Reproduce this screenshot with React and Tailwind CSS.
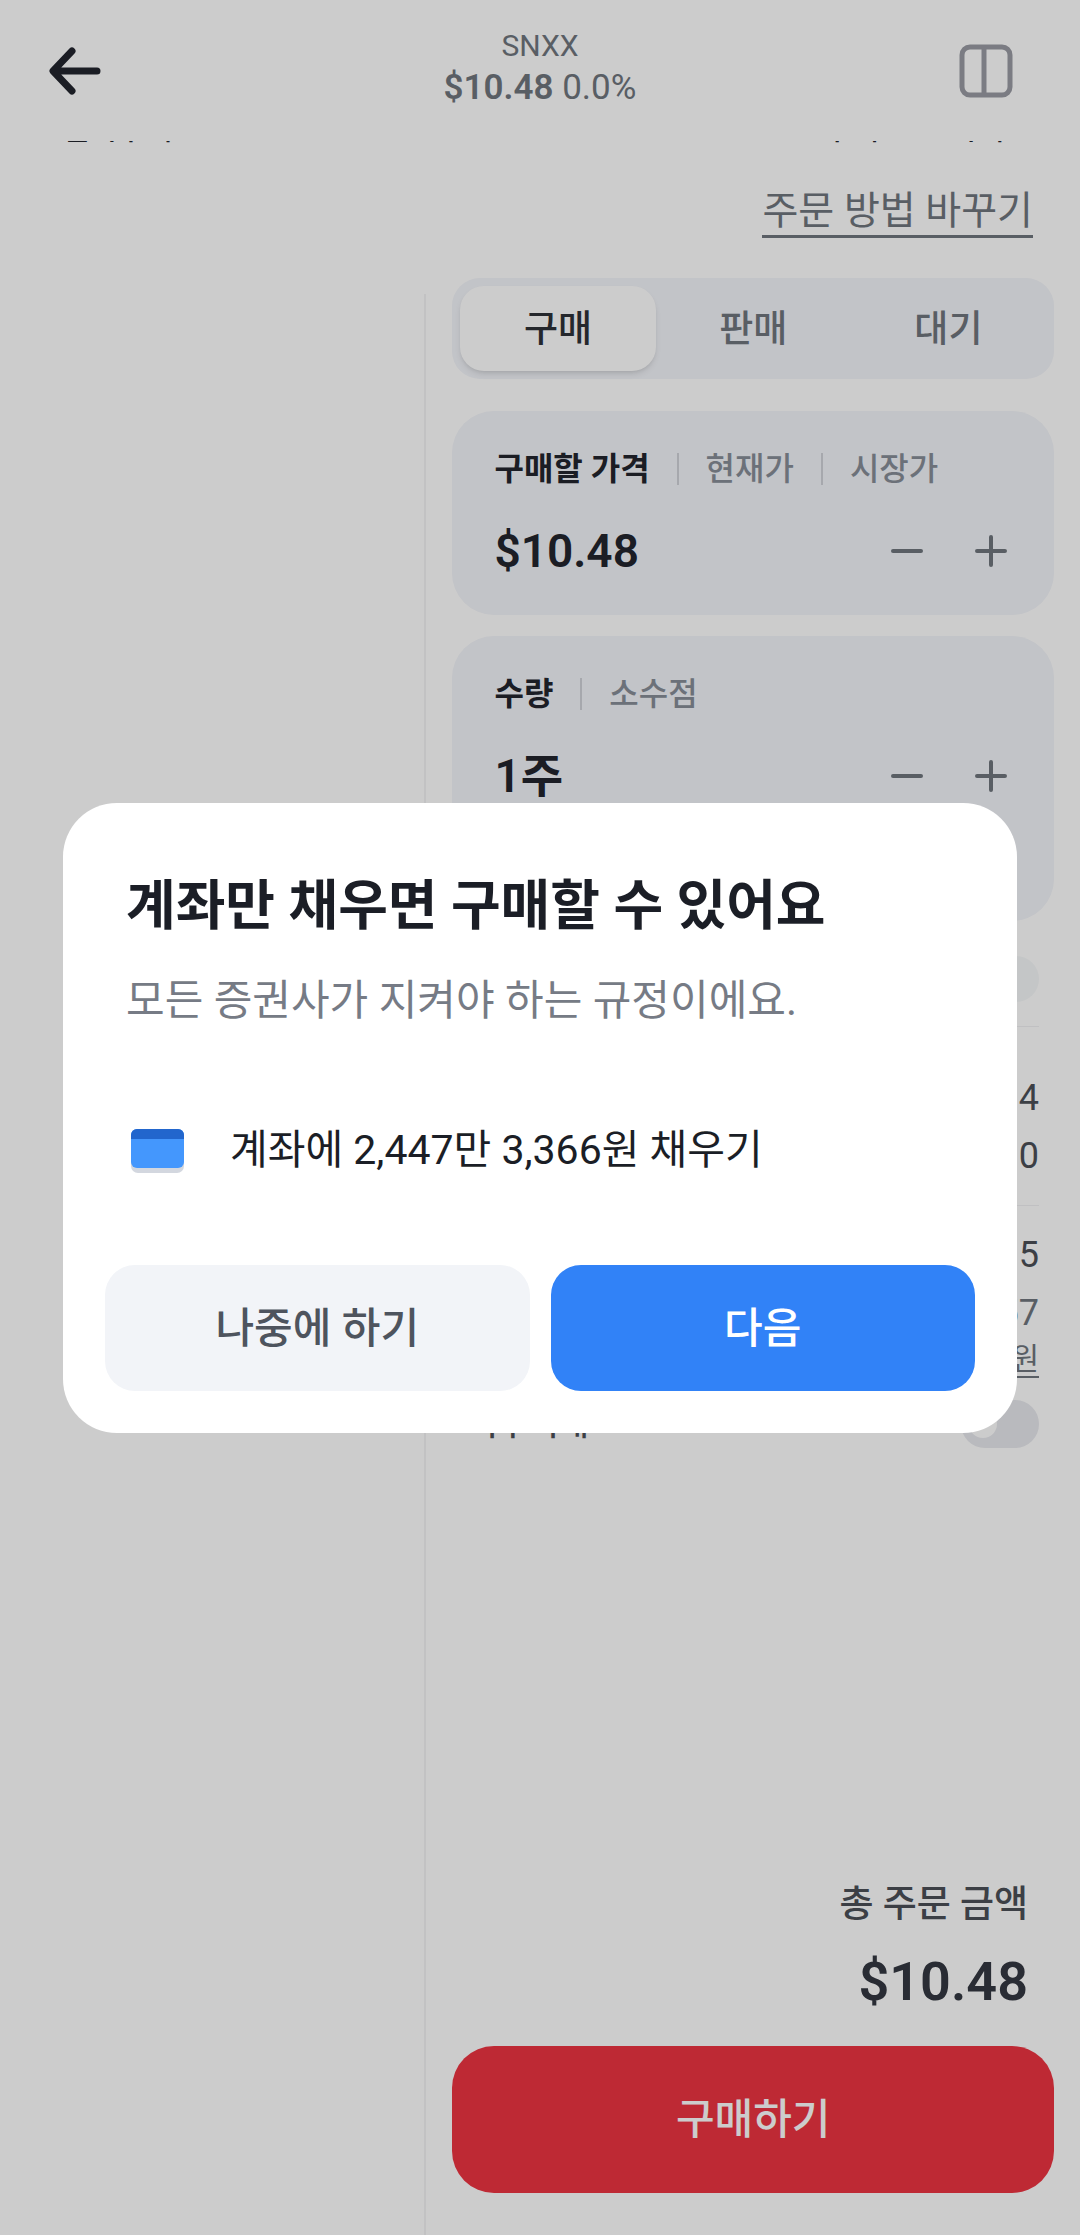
import { useState } from "react"

function Header() {
    return (
        <header className="grid h-[141px] grid-cols-[1fr_auto_1fr] items-center px-12">
            <button aria-label="뒤로" className="justify-self-start text-[#22252e]">
                <svg width="54" height="54" viewBox="0 0 54 54" fill="none" stroke="currentColor" strokeWidth="7" strokeLinecap="round" strokeLinejoin="round">
                    <path d="M24 7L5 27L24 47M6 27H49" />
                </svg>
            </button>
            <div className="flex flex-col items-center pb-2 text-[#70767e]">
                <p className="text-[30px] leading-[42px]">SNXX</p>
                <p className="text-[35px] leading-[42px]"><b className="font-semibold">$10.48</b> 0.0%</p>
            </div>
            <button aria-label="화면 나누기" className="mr-4 justify-self-end text-[#9a9ca4]">
                <svg width="60" height="60" viewBox="0 0 60 60" fill="none" stroke="currentColor" strokeWidth="5">
                    <rect x="6" y="6" width="48" height="48" rx="8" />
                    <path d="M28 6V54" />
                </svg>
            </button>
        </header>
    )
}

function Tabs() {
    const [tab, setTab] = useState("구매")

    return (
        <div className="grid grid-cols-3 rounded-[28px] bg-[#f3f5fa] p-2">
            {["구매", "판매", "대기"].map((name) => (
                <button
                    key={name}
                    onClick={() => setTab(name)}
                    className={
                        tab === name
                            ? "h-[85px] rounded-3xl bg-white pt-[2px] text-[37px] font-medium text-[#2e3138] shadow-md"
                            : "h-[85px] rounded-3xl pt-[2px] text-[37px] font-medium text-[#70767e]"
                    }
                >
                    {name}
                </button>
            ))}
        </div>
    )
}

function Stepper({ id, label, options, value, tall }) {
    return (
        <div className={tall ? "rounded-[42px] bg-[#f3f5fa] px-[42px] pt-[34px] pb-[115px]" : "rounded-[42px] bg-[#f3f5fa] px-[42px] pt-[34px] pb-[34px]"}>
            <div className="flex h-12 items-center text-[32px] font-medium text-[#878e98]">
                <label htmlFor={id} className="font-semibold text-[#22252e]">{label}</label>
                {options.map((option) => (
                    <div key={option} className="flex items-center">
                        <span className="mx-[27px] h-8 w-[2px] bg-[#d0d3d9]" />
                        <button>{option}</button>
                    </div>
                ))}
            </div>
            <div className="mt-7 flex h-[60px] items-center">
                <input id={id} defaultValue={value} className="w-0 min-w-0 flex-1 bg-transparent text-[46px] font-semibold text-[#22252e] outline-none" />
                <div className="flex gap-11 text-[#70767e]">
                    <button aria-label={`${label} 줄이기`}>
                        <svg width="40" height="40" viewBox="0 0 40 40" stroke="currentColor" strokeWidth="4" strokeLinecap="round"><path d="M5 20H33" /></svg>
                    </button>
                    <button aria-label={`${label} 늘리기`}>
                        <svg width="40" height="40" viewBox="0 0 40 40" stroke="currentColor" strokeWidth="4" strokeLinecap="round"><path d="M5 20H33M19 6V34" /></svg>
                    </button>
                </div>
            </div>
        </div>
    )
}

function Summary() {
    return (
        <div className="px-[15px] text-right text-[36px] text-[#4b4f57]">
            <div className="mt-[35px] ml-auto h-[46px] w-24 rounded-full bg-[#f6f8f9]" />
            <hr className="mt-6 mb-[42px] border-[#f0f1f3]" />
            <p className="leading-[58px]">4</p>
            <p className="leading-[58px]">0</p>
            <hr className="my-5 border-[#f0f1f3]" />
            <p className="leading-[58px]">5</p>
            <p className="leading-[58px] text-[#70767e]">57</p>
            <div className="flex justify-end">
                <a href="#exchange" className="border-b-2 border-[#70767e] text-[30px] leading-[34px] text-[#70767e]">원</a>
            </div>
            <label className="mt-[22px] flex h-12 items-center justify-between text-[33px] font-medium">
                미수거래
                <input type="checkbox" role="switch" className="peer sr-only" />
                <span className="flex h-12 w-[78px] items-center rounded-full bg-[#e8e9ee] px-2 peer-checked:justify-end">
                    <span className="size-7 rounded-full bg-white" />
                </span>
            </label>
        </div>
    )
}

function DepositDialog() {
    return (
        <div className="fixed inset-0 flex items-center justify-center bg-black/20 px-[63px]">
            <div role="dialog" aria-modal="true" aria-labelledby="deposit-title" className="w-full rounded-[54px] bg-white p-[42px] pt-[68px]">
                <div className="px-[21px]">
                    <h2 id="deposit-title" className="text-[54px] leading-[72px] font-bold text-[#1b1e26]">계좌만 채우면 구매할 수 있어요</h2>
                    <p className="mt-7 text-[42px] leading-[60px] text-[#767b85]">모든 증권사가 지켜야 하는 규정이에요.</p>
                    <div className="mt-[89px] flex items-center">
                        <svg width="64" height="60" viewBox="0 0 64 60" className="shrink-0">
                            <rect x="5" y="14" width="53" height="39" rx="7" fill="#d3d7df" />
                            <rect x="5" y="9" width="53" height="39" rx="6" fill="#4497fd" />
                            <path d="M5 19V15a6 6 0 0 1 6-6H52a6 6 0 0 1 6 6V19Z" fill="#2266cd" />
                        </svg>
                        <p className="ml-10 text-[41px] leading-[60px] text-[#1b1e26]">계좌에 2,447만 3,366원 채우기</p>
                    </div>
                </div>
                <div className="mt-[85px] grid grid-cols-2 gap-[21px] text-[42px] font-medium">
                    <button className="h-[126px] rounded-[30px] bg-[#f2f4f8] pt-[2px] text-[#4e545e]">나중에 하기</button>
                    <button className="h-[126px] rounded-[30px] bg-[#3182f7] pt-[2px] text-white">다음</button>
                </div>
            </div>
        </div>
    )
}

export default function App() {
    return (
        <div className="flex min-h-screen flex-col bg-white font-['Roboto','Noto_Sans_CJK_KR',sans-serif]">
            <Header />
            {/* row that has scrolled under the header */}
            <div className="flex h-[3px] items-end justify-between overflow-hidden pr-[76px] pl-[62px] text-[30px] leading-[30px] font-medium text-[#22252e]">
                <span>일시구매</span>
                <span className="flex gap-[70px]">
                    <span>구매</span>
                    <span>시세</span>
                </span>
            </div>
            <div className="flex flex-1">
                <aside className="w-[39.3%] shrink-0" />
                <div className="mt-[150px] w-[2px] bg-[#f3f3f4]" />
                <main className="flex flex-1 flex-col px-[26px] pb-[42px]">
                    <div className="mt-[43px] mb-10 flex justify-end pr-[21px]">
                        <a href="#order-type" className="border-b-[3px] border-[#70767e] text-[39px] leading-[48px] text-[#70767e]">주문 방법 바꾸기</a>
                    </div>
                    <Tabs />
                    <div className="mt-8 flex flex-col gap-[21px]">
                        <Stepper id="price" label="구매할 가격" options={["현재가", "시장가"]} value="$10.48" />
                        <Stepper id="amount" label="수량" options={["소수점"]} value="1주" tall />
                    </div>
                    <Summary />
                    <div className="mt-auto mb-7 pr-[26px] text-right">
                        <p className="text-[37px] leading-[54px] font-medium text-[#4b4f57]">총 주문 금액</p>
                        <p className="mt-[14px] text-[54px] leading-[72px] font-semibold text-[#343841]">$10.48</p>
                    </div>
                    <button className="h-[147px] rounded-[42px] bg-[#ee3442] text-[42px] font-medium text-white">구매하기</button>
                </main>
            </div>
            <DepositDialog />
        </div>
    )
}
